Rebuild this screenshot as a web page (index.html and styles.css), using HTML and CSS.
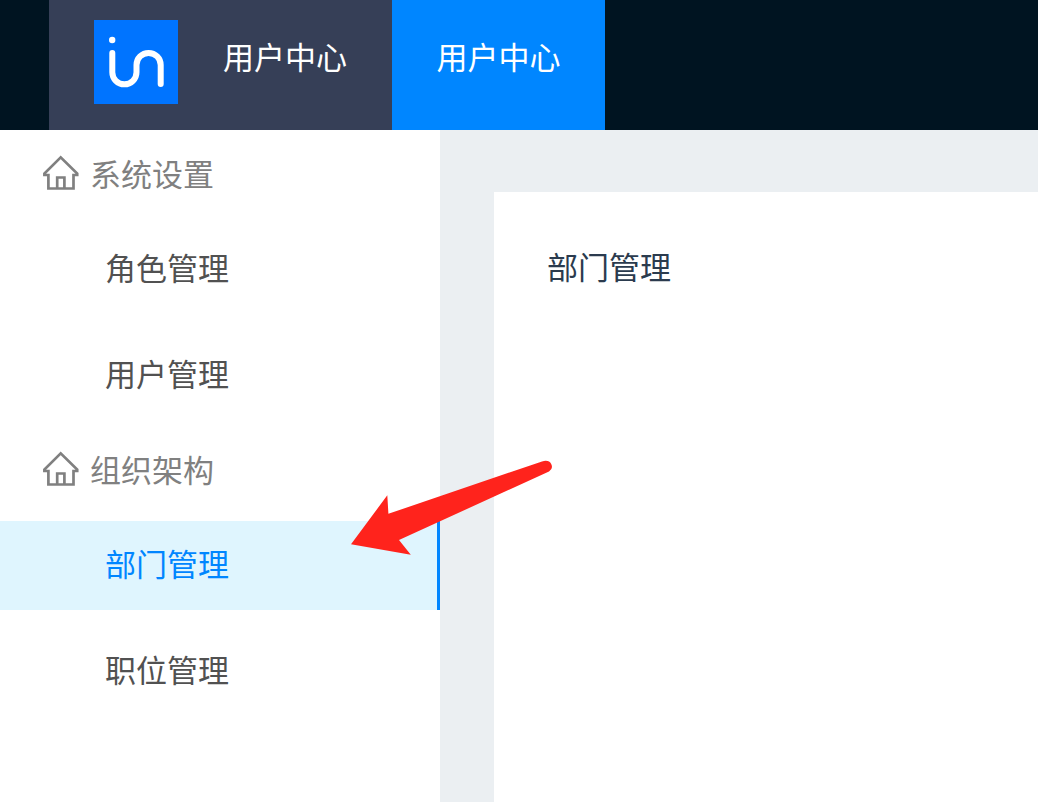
FILE: index.html
```html
<!DOCTYPE html>
<html lang="zh-CN">
<head>
<meta charset="utf-8">
<meta name="viewport" content="width=device-width, initial-scale=1">
<title>用户中心</title>
<link rel="stylesheet" href="styles.css">
</head>
<body>
<div class="app">
  <header class="header">
    <a class="brand" href="#home">
      <svg class="brand-logo" viewBox="0 0 84 84" aria-hidden="true">
        <rect width="84" height="84" fill="#0074ff"/>
        <circle cx="18.2" cy="20" r="3.2" fill="#fff"/>
        <path d="M18.3 33V52.2a12.1 12.1 0 0 0 24.2 0V45a12.1 12.1 0 0 1 24.2 0V64" fill="none" stroke="#fff" stroke-width="6" stroke-linecap="round"/>
      </svg>
      <span>用户中心</span>
    </a>
    <nav class="tabs">
      <a class="tab" href="#users" aria-current="page">用户中心</a>
    </nav>
  </header>
  <div class="body">
    <nav class="sidebar">
      <section class="group">
        <h2 class="group-title">
          <svg class="group-icon" viewBox="0 0 36 36" aria-hidden="true"><path d="M17.7 2.4 1.4 18.6V20H5.4V33.5H30.5V20H34.2V18.6ZM14.2 33V22.5H21.4V33"/></svg>
          <span>系统设置</span>
        </h2>
        <ul class="menu">
          <li><a class="menu-item" href="#roles">角色管理</a></li>
          <li><a class="menu-item" href="#accounts">用户管理</a></li>
        </ul>
      </section>
      <section class="group">
        <h2 class="group-title">
          <svg class="group-icon" viewBox="0 0 36 36" aria-hidden="true"><path d="M17.7 2.4 1.4 18.6V20H5.4V33.5H30.5V20H34.2V18.6ZM14.2 33V22.5H21.4V33"/></svg>
          <span>组织架构</span>
        </h2>
        <ul class="menu">
          <li><a class="menu-item selected" href="#departments" aria-current="page">部门管理</a></li>
          <li><a class="menu-item" href="#positions">职位管理</a></li>
        </ul>
      </section>
    </nav>
    <main class="content">
      <div class="card">
        <h1 class="card-title">部门管理</h1>
      </div>
    </main>
  </div>
  <svg class="arrow" viewBox="0 0 204 98" aria-hidden="true">
    <path d="M1 86.3 37.3 37.3 38.4 55.8 192 3.4Q199 1.500 201.200 6Q203.500 11 199 13.500L49 82 60.800 96.700Z" fill="#ff231c"/>
  </svg>
</div>
</body>
</html>
```

FILE: styles.css
```css
* {
  box-sizing: border-box;
}

body {
  margin: 0;
  font-family: "Noto Sans CJK SC", "Noto Sans", sans-serif;
  font-size: 31px;
  font-weight: 400;
  color: #515151;
}

a {
  color: inherit;
  text-decoration: none;
}

h1,
h2,
ul {
  margin: 0;
  padding: 0;
  font-size: inherit;
  font-weight: inherit;
  list-style: none;
}

.app {
  position: relative;
  display: flex;
  flex-direction: column;
  min-height: 100vh;
}

.header {
  display: flex;
  padding-left: 49px;
  background: #001421;
  color: #fff;
  line-height: 112px;
}

.brand {
  display: flex;
  gap: 45px;
  padding: 0 45px 18px;
  background: #363f57;
}

.brand-logo {
  width: 84px;
  height: 84px;
  margin-top: 20px;
}

.tabs {
  display: flex;
}

.tab {
  min-width: 213px;
  padding-bottom: 18px;
  background: #0086ff;
  text-align: center;
}

.body {
  display: flex;
  flex: 1;
}

.sidebar {
  flex: 0 0 440px;
  background: #fff;
}

.group {
  padding-bottom: 6px;
}

.group-title {
  display: flex;
  align-items: center;
  gap: 11px;
  height: 85px;
  padding-left: 43px;
  color: #808080;
}

.group-icon {
  width: 36px;
  height: 36px;
  fill: none;
  stroke: currentColor;
  stroke-width: 2.7;
}

.menu {
  display: flex;
  flex-direction: column;
  gap: 17px;
  padding-top: 10px;
}

.menu-item {
  display: block;
  padding: 0 0 6px 105px;
  border-right: 3px solid transparent;
  line-height: 83px;
}

.selected {
  border-color: #0086ff;
  background: #dff5fe;
  color: #0086ff;
}

.content {
  display: flex;
  flex: 1;
  padding: 62px 0 0 54px;
  background: #ebeff2;
}

.card {
  flex: 1;
  padding: 51px 53px;
  background: #fff;
}

.card-title {
  color: #2b3b4e;
  line-height: 46px;
}

.arrow {
  position: absolute;
  left: 350px;
  top: 458px;
  width: 204px;
  height: 98px;
  pointer-events: none;
}
```
